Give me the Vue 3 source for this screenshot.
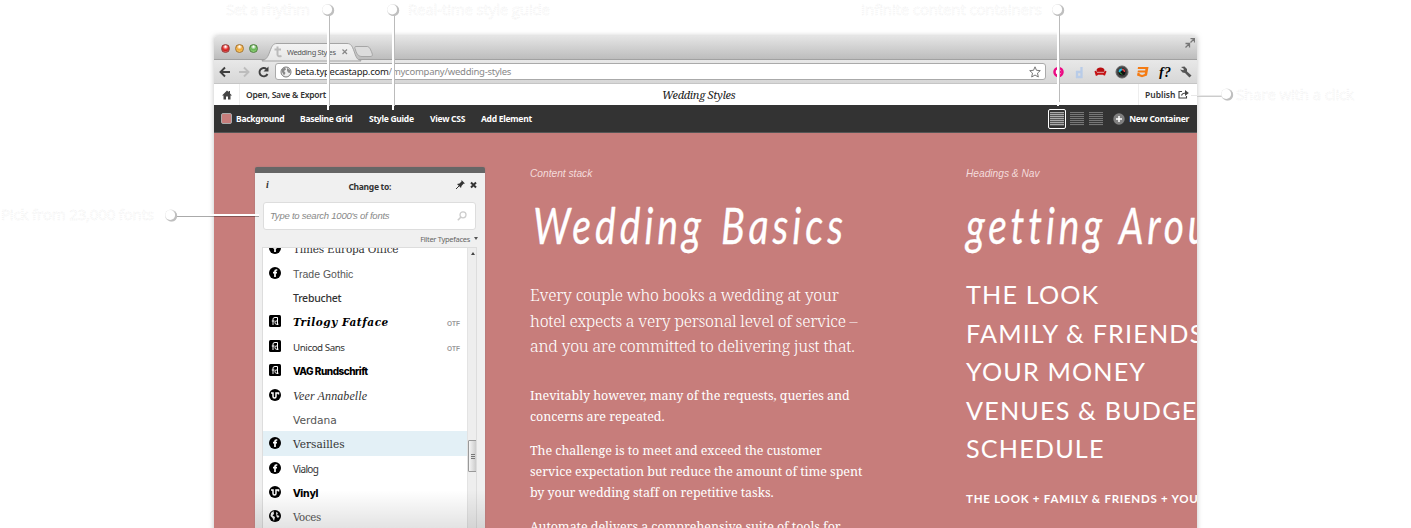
<script setup>
const fonts = [
  { name: 'Times Europa Office', icon: 'f', cls: 'times' },
  { name: 'Trade Gothic', icon: 'f', cls: 'trade' },
  { name: 'Trebuchet', icon: '', cls: 'treb' },
  { name: 'Trilogy Fatface', icon: 'fd', cls: 'trilogy', tag: 'OTF' },
  { name: 'Unicod Sans', icon: 'fd', cls: 'unicod', tag: 'OTF' },
  { name: 'VAG Rundschrift', icon: 'fd', cls: 'vag' },
  { name: 'Veer Annabelle', icon: 'v', cls: 'veer' },
  { name: 'Verdana', icon: '', cls: 'verdana' },
  { name: 'Versailles', icon: 'f', cls: 'versailles', active: true },
  { name: 'Vialog', icon: 'f', cls: 'vialog' },
  { name: 'Vinyl', icon: 'v', cls: 'vinyl' },
  { name: 'Voces', icon: 'globe', cls: 'voces' },
]
const intro = ['Every couple who books a wedding at your', 'hotel expects a very personal level of service –', 'and you are committed to delivering just that.']
const paras = [
  ['Inevitably however, many of the requests, queries and', 'concerns are repeated.'],
  ['The challenge is to meet and exceed the customer', 'service expectation but reduce the amount of time spent', 'by your wedding staff on repetitive tasks.'],
  ['Automate delivers a comprehensive suite of tools for'],
]
const nav = ['THE LOOK', 'FAMILY & FRIENDS', 'YOUR MONEY', 'VENUES & BUDGET', 'SCHEDULE']
</script>

<template>
  <div class="stage">
    <div class="window">
      <div class="titlebar">
        <div class="lights"><i class="red" /><i class="amber" /><i class="green" /></div>
        <svg class="tabs" width="116" height="19" viewBox="0 0 116 19">
          <defs><linearGradient id="tab" x2="0" y2="1"><stop offset="0" stop-color="#f3f3f3" /><stop offset="1" stop-color="#e6e6e6" /></linearGradient></defs>
          <path d="M-3 18.500C1 18 3 15 5 9C7 4 8 1.500 12 1.500H82C86 1.500 87 4 89 9C91 15 92 18 96 18.500V19H-3Z" fill="url(#tab)" stroke="#a4a4a4" />
          <path d="M91 4.500H102C104 4.500 105 6 107 11C108 14 107 14.500 105 14.500H97C94 14.500 92 13 90.500 8C89.500 5.500 89.500 4.500 91 4.500Z" fill="#dcdcdc" stroke="#a6a6a6" />
          <path d="M12.500 4.500V12.500Q12.500 15 16.500 14M9.500 7.500H16" fill="none" stroke="#bbb" stroke-width="2" />
          <text x="22" y="13" textLength="49" class="tabtext">Wedding Styles</text>
          <path d="M77.500 7.500L82 12M82 7.500L77.500 12" stroke="#888" stroke-width="1.200" />
        </svg>
        <svg class="expand" width="10" height="10" viewBox="0 0 10 10" fill="none" stroke="#777"><path d="M5.500 .5H9.500V4.500M9 1L5.500 4.500M.5 5.500H4.500V9.500M4 6L.5 9.500" stroke-width="1.300" /></svg>
      </div>

      <div class="browserbar">
        <svg class="arrows" width="50" height="12" viewBox="0 0 50 12" fill="none" stroke-width="1.900">
          <path d="M11 6H2M6 1.500L1.500 6L6 10.500" stroke="#404040" />
          <path d="M20 6H29M25 1.500L29.500 6L25 10.500" stroke="#bdbdbd" />
          <path d="M48.500 8A4.200 4.200 0 1 1 47.500 3" stroke="#404040" /><path d="M49.500 .5V5.500H44.500Z" fill="#404040" />
        </svg>
        <div class="address">
          <svg width="12" height="12" viewBox="0 0 12 12"><circle cx="6" cy="6" r="5" fill="#eee" stroke="#777" /><path d="M2 3L5 1.500L6 3.500L4 5L5.500 7L4 9.500L2 6ZM7 2L10 4L10 7L8 6.500L7 4.500Z" fill="#888" /></svg>
          <span class="url">beta.typecastapp.com<em>/mycompany/wedding-styles</em></span>
          <svg class="star" width="12" height="12" viewBox="0 0 12 12"><path d="M6 .8L7.500 4.300L11.300 4.600L8.500 7.100L9.300 11L6 9L2.700 11L3.500 7.100L.7 4.600L4.500 4.300Z" fill="#fff" stroke="#777" /></svg>
        </div>
        <svg class="extensions" width="144" height="14" viewBox="0 0 144 14">
          <circle cx="6.500" cy="7" r="4" fill="#fff" stroke="#eb0a83" stroke-width="2.500" /><path d="M8 5L10 7L8 9Z" fill="#eb0a83" />
          <path d="M29.500 2V12H25V7H29" fill="none" stroke="#b9cce8" stroke-width="2.300" />
          <path d="M44.500 5Q45 2.500 48.500 2.500Q52 2.500 52.500 5L52 7H45Z" fill="#b90d10" /><path d="M42.500 6.500Q43.500 5 45 7H52Q53.500 5 54.500 6.500L53 10.500H52L51 9.800H46L45 10.800H43.800Z" fill="#c51215" /><path d="M45 7.300H52" stroke="#eee" stroke-width=".7" />
          <circle cx="70" cy="7" r="6" fill="#454545" stroke="#666" /><circle cx="70" cy="7" r="3.500" fill="#111" /><path d="M67.500 7A2.500 2.500 0 0 1 70 4.500" stroke="#20bde5" stroke-width="1.800" fill="none" /><path d="M70 4.500A2.500 2.500 0 0 1 72.500 7" stroke="#e34545" stroke-width="1.300" fill="none" /><path d="M67.500 7L70 9.500" stroke="#40c34a" />
          <path d="M86 2H96.500L95 10.500L90 12.200L85 10.500L85.500 8H87.800L87.500 9.100L90.100 10L92.700 9L93 7.500H85.500L85.900 5.500H93.200L93.400 4H85.700Z" fill="#f47b13" />
          <text x="107" y="11.500" class="fq" textLength="12">f?</text>
          <path d="M129 2L132.500 1.500L135 4L135 6.500L139.500 10.500L137.500 12.500L133 8L130.500 7.500L128 4.500L131.300 5.300L132 4Z" fill="#555" />
        </svg>
      </div>

      <div class="appbar">
        <div class="home"><svg width="10" height="10" viewBox="0 0 10 10"><path d="M5 .5L0 5.500H1.500V9.500H4V6.500H6V9.500H8.500V5.500H10L8 3.500V1H6.700V2Z" fill="#444" /></svg></div>
        <span class="open">Open, Save &amp; Export</span>
        <span class="doc">Wedding Styles</span>
        <div class="publish"><span>Publish</span><svg width="11" height="9" viewBox="0 0 11 9" fill="none" stroke="#444" stroke-width="1.100"><path d="M4 1.500H1V8H8.500V6M3.500 5.500C4 3.500 5.500 3 8 3" /><path d="M7 0L10.800 3L7 6Z" fill="#444" stroke="none" /></svg></div>
      </div>

      <div class="tools">
        <i class="swatch" />
        <span class="t1">Background</span><span class="t2">Baseline Grid</span><span class="t3">Style Guide</span><span class="t4">View CSS</span><span class="t5">Add Element</span>
        <div class="views">
          <b v-for="n in 3" :key="n" :class="{ on: n === 1 }"><i /></b>
        </div>
        <svg width="12" height="12" viewBox="0 0 12 12"><circle cx="6" cy="6" r="5.700" fill="#808080" /><path d="M6 3V9M3 6H9" stroke="#fff" stroke-width="1.500" /></svg>
        <span class="t6">New Container</span>
      </div>

      <div class="canvas">
        <section class="panel">
          <header>
            <i class="info">i</i><b>Change to:</b>
            <svg width="22" height="10" viewBox="0 0 22 10"><path d="M5.500 0L9 3.500L7.500 3.800L5.500 6L5 8L1 4L3.500 3.500L5.500 1.500Z" fill="#333" /><path d="M3.500 5.500L0 9" stroke="#333" /><path d="M15 2.500L20 7.500M20 2.500L15 7.500" stroke="#333" stroke-width="2" /></svg>
          </header>
          <div class="search"><span>Type to search 1000's of fonts</span><svg width="10" height="10" viewBox="0 0 10 10" fill="none" stroke="#ccc"><circle cx="6" cy="3.800" r="3" stroke-width="1.300" /><path d="M4 6L.8 9.200" stroke-width="1.600" /></svg></div>
          <div class="filter"><span>Filter Typefaces</span><i /></div>
          <div class="listbox">
            <div class="list">
              <div v-for="f in fonts" :key="f.name" class="row" :class="{ active: f.active }">
                <svg width="12" height="12" viewBox="0 0 12 12">
                  <template v-if="f.icon === 'f'"><circle cx="6" cy="6" r="6" /><path d="M8.300 3H7.300Q6 3 6 4.300V10M4 5.600H8" fill="none" stroke="#fff" stroke-width="1.700" /></template>
                  <template v-if="f.icon === 'fd'"><rect width="12" height="12" rx="1.500" /><path d="M4 10V4Q4 2.500 6 2.500H8.500V10M2.800 6H5.500M8.500 6H7Q6 6 6 7.500T7 9.200H9.500" fill="none" stroke="#fff" /></template>
                  <template v-if="f.icon === 'v'"><circle cx="6" cy="6" r="6" /><path d="M2 4H4V7.500Q4 9 5.500 9Q7 9 7 7.500V4H9.500V5.500" fill="none" stroke="#fff" stroke-width="1.500" /></template>
                  <template v-if="f.icon === 'globe'"><circle cx="6" cy="6" r="6" /><path d="M2 3L4.500 1L5 4L3.500 5.500L6 7L5 11L3.500 8L1.500 6ZM7 2L9 3L8 5L10.500 6L9 8L7.500 6.500Z" fill="#f1f1f1" /></template>
                </svg>
                <span class="name"><span :class="f.cls">{{ f.name }}</span></span>
                <small v-if="f.tag">{{ f.tag }}</small>
              </div>
            </div>
            <div class="scroll"><i class="up" /><i class="thumb" /></div>
          </div>
          <div class="fade" />
        </section>

        <section class="stack">
          <div class="label">Content stack</div>
          <svg class="script" width="350" height="86" viewBox="0 0 350 86">
            <text x="3" y="63" textLength="172" lengthAdjust="spacingAndGlyphs">Wedding</text>
            <text x="191" y="63" textLength="126" lengthAdjust="spacingAndGlyphs">Basics</text>
          </svg>
          <div class="intro"><div v-for="l in intro" :key="l">{{ l }}</div></div>
          <div class="copy">
            <p v-for="(p, i) in paras" :key="i"><span v-for="l in p" :key="l">{{ l }}</span></p>
          </div>
        </section>

        <section class="headings">
          <div class="label">Headings &amp; Nav</div>
          <svg class="script" width="350" height="86" viewBox="0 0 350 86">
            <text x="0" y="63" textLength="140" lengthAdjust="spacingAndGlyphs">getting</text>
            <text x="153" y="63" textLength="142" lengthAdjust="spacingAndGlyphs">Around</text>
          </svg>
          <div class="nav"><div v-for="n in nav" :key="n">{{ n }}</div></div>
          <div class="crumbs">THE LOOK + FAMILY &amp; FRIENDS + YOUR MONEY</div>
        </section>
      </div>
    </div>

    <svg class="callouts" width="1411" height="240" viewBox="0 0 1411 240">
      <g class="notes">
        <text x="226" y="15" textLength="84">Set a rhythm</text>
        <text x="408" y="15" textLength="142">Real-time style guide</text>
        <text x="861" y="15" textLength="181">Infinite content containers</text>
        <text x="1236" y="100" textLength="118">Share with a click</text>
        <text x="1" y="220" textLength="153">Pick from 23,000 fonts</text>
      </g>
      <g v-for="p in [[328, 110], [393, 110], [1058, 106]]" :key="p[0]">
        <path :d="`M${p[0] + 1.500} 15V${p[1] - 4}`" stroke="#bbb" /><path :d="`M${p[0]} 13V${p[1]}`" stroke="#fff" stroke-width="2" />
      </g>
      <path d="M1197 96.500H1223" stroke="#ccc" /><path d="M1191 95.500H1223" stroke="#e8e8e8" />
      <path d="M176 216.500H259" stroke="#0005" /><path d="M176 215H259" stroke="#fff" stroke-width="2" />
      <g v-for="p in [[328, 9.500], [393, 9.500], [1058, 9.500], [1227, 94], [171, 215]]" :key="p[0]">
        <circle :cx="p[0]" :cy="p[1] + .5" r="6" fill="#ddd" /><circle :cx="p[0] + .7" :cy="p[1] + 1" r="5.500" fill="#bfbfbf" /><circle :cx="p[0] - .8" :cy="p[1]" r="4.900" fill="#fff" />
      </g>
    </svg>
  </div>
</template>

<style>
html, body { margin: 0; overflow: hidden; background: #fff; }
</style>
<style scoped>
* { box-sizing: border-box; }
.stage { position: relative; width: 1411px; height: 528px; overflow: hidden; padding: 36px 214px 0; font-family: "Noto Sans", "Open Sans", sans-serif; }
.window { width: 983px; height: 500px; box-shadow: 0 0 5px #8888; border-radius: 3px 3px 0 0; }
svg { display: block; flex: none; }
.titlebar { height: 24px; display: flex; background: linear-gradient(#e5e5e5, #bdbdbd); border-bottom: 1px solid #a1a1a1; border-radius: 3px 3px 0 0; }
.lights { display: flex; gap: 4.500px; padding: 7.500px 0 0 6.500px; width: 49px; }
.lights i { width: 9.500px; height: 9.500px; border-radius: 50%; border: 1px solid #943b38; background: radial-gradient(circle at 50% 25%, #fff 5%, #ed3f3b 40%, #c82020 60%, #ff9b98); }
.lights .amber { border-color: #a57431; background: radial-gradient(circle at 50% 25%, #fff 5%, #f0a838 45%, #ffda75); }
.lights .green { border-color: #4d803d; background: radial-gradient(circle at 50% 25%, #fff 5%, #67b554 45%, #a6e38e); }
.tabs { margin-top: 6px; margin-left: 2px; overflow: visible; }
.tabtext { font: 7.500px "Noto Sans", sans-serif; fill: #555; }
.expand { margin: 2px 2px 0 auto; }
.browserbar { height: 24px; display: flex; align-items: center; background: linear-gradient(#e8e8e8, #d7d7d7); border-bottom: 1px solid #c5c5c5; }
.arrows { margin-left: 5px; }
.address { width: 771px; height: 17px; margin-left: 6px; border: 1px solid #aaa; border-radius: 3px; background: #fff; display: flex; align-items: center; padding: 0 4px; }
.url { font-size: 9.500px; line-height: 15px; margin-left: 3px; color: #222; letter-spacing: -.25px; }
.url em { font-style: normal; color: #888; }
.star { margin-left: auto; }
.extensions { margin-left: 6px; }
.fq { font: italic bold 14px "Liberation Serif", serif; }
.appbar { height: 21px; display: flex; align-items: center; background: #fff; font-size: 8.500px; font-weight: 600; color: #333; }
.home { width: 26px; height: 21px; padding: 6px 0 0 8px; border-right: 1px solid #eee; }
.open { width: 80px; margin-left: 6px; white-space: nowrap; letter-spacing: -.22px; }
.doc { margin-left: 336px; font: italic 11px "Noto Serif", "DejaVu Serif", serif; color: #222; letter-spacing: -.3px; width: 90px; white-space: nowrap; }
.publish { height: 21px; margin-left: auto; width: 59px; border-left: 1px solid #eee; display: flex; align-items: center; gap: 3px; padding-left: 6px; }
.tools { height: 28px; background: #333; border-bottom: 1px solid #555; color: #fff; display: flex; align-items: center; font-size: 8.500px; font-weight: 700; white-space: nowrap; letter-spacing: -.27px; }
.tools span { padding-bottom: 1px; }
.swatch { width: 11px; height: 11px; margin: 0 4px 0 7px; border: 1px solid #aaa; border-radius: 2px; background: #c77d7b; }
.t1 { width: 64px; }.t2 { width: 69px; }.t3 { width: 61px; }.t4 { width: 51px; }.t5 { width: 60px; }
.views { display: flex; gap: 1.500px; margin: 0 8px 0 auto; }
.views b { width: 18px; height: 20px; padding: 3px 2px; }
.views i { display: block; height: 14px; background: repeating-linear-gradient(#777 0 1px, #383838 1px 2px); }
.views .on { border: 1px solid #fff; border-radius: 2px; padding: 2px 1px; }
.views .on i { background: repeating-linear-gradient(#aaa 0 1px, #555 1px 2px); }
.t6 { margin: 0 8px 0 4px; }
.canvas { height: 395px; background: #c77d7b; color: #fff; overflow: hidden; display: flex; align-items: flex-start; }
.panel { position: relative; flex: none; margin: 34px 0 0 41px; width: 230px; height: 361px; background: #f0f0f0; border-top: 6px solid #666; border-radius: 2px 2px 0 0; color: #333; box-shadow: 0 0 2px #7777; }
.panel header { height: 29px; display: flex; align-items: center; justify-content: space-between; padding: 0 7px 6px 11px; font-size: 8.500px; letter-spacing: -.3px; }
.panel header b { margin-left: 15px; padding-top: 3px; }
.info { font: italic bold 10px "Liberation Serif", serif; }
.search { margin: 0 9px 0 8px; height: 28px; border: 1px solid #ddd; border-radius: 3px; background: #fff; display: flex; align-items: center; justify-content: space-between; padding: 0 8px 1px 6px; font: italic 9.500px "Liberation Sans", sans-serif; letter-spacing: -.23px; color: #888; }
.filter { height: 17px; display: flex; align-items: center; justify-content: flex-end; gap: 4px; padding: 0 7px 0 0; font-size: 7.500px; letter-spacing: -.3px; color: #666; }
.filter i { border: 2px solid transparent; border-top: 3px solid #555; border-bottom: 0; }
.listbox { margin: 0 8px 0 7px; height: 282px; border: 1px solid #ddd; border-bottom: 0; background: #fff; display: flex; overflow: hidden; }
.list { width: 204px; margin-top: -12px; flex: none; }
.row { height: 24.400px; display: flex; align-items: center; padding-left: 6px; }
.active { background: #e3f0f6; }
.name { width: 148px; height: 20px; margin-left: 12px; line-height: 19px; white-space: nowrap; }
.row small { margin: 5px 0 0 6px; font: bold 6.500px "Liberation Sans", sans-serif; color: #999; }
.times { font: 10.500px "DejaVu Serif", serif; letter-spacing: -.2px; }
.trade { font: 10.500px "Liberation Sans", sans-serif; color: #555; }
.treb { font: 500 10.500px "Noto Sans", sans-serif; letter-spacing: -.25px; }
.trilogy { font: italic bold 10.500px "DejaVu Serif", serif; letter-spacing: .55px; color: #000; }
.unicod { font: 9.800px "Noto Sans", sans-serif; letter-spacing: -.45px; }
.vag { font: 800 10px "Inter", sans-serif; letter-spacing: -.5px; color: #000; }
.veer { font: italic 12px "Liberation Serif", serif; letter-spacing: .1px; }
.verdana { font: 10.700px "DejaVu Sans", sans-serif; color: #555; }
.versailles { font: 10.500px "DejaVu Serif", serif; letter-spacing: .05px; }
.vialog { font: 10px "Noto Sans", sans-serif; letter-spacing: -.6px; }
.vinyl { font: bold 11px "Liberation Sans Narrow", "DejaVu Sans Condensed", sans-serif; letter-spacing: -.5px; color: #000; }
.voces { font: 10.200px "DejaVu Serif", serif; letter-spacing: -.3px; color: #555; }
.scroll { flex: 1; background: #eee; border-left: 1px solid #e3e3e3; display: flex; flex-direction: column; align-items: center; }
.up { margin-top: 4px; border: 2px solid transparent; border-bottom: 3px solid #444; border-top: 0; }
.thumb { width: 9px; height: 32px; margin-top: 185px; border: 1px solid #999; border-radius: 1px; background: repeating-linear-gradient(#777 0 1px, #ddd 1px 2px) center / 4px 5px no-repeat, linear-gradient(90deg, #f5f5f5, #ccc); }
.fade { position: absolute; left: 0; right: 0; bottom: 0; height: 38px; background: linear-gradient(#0000, #0000001c); }
.stack { flex: none; width: 435px; padding: 34px 0 0 45px; }
.headings { flex: none; width: 400px; padding: 34px 0 0 46px; white-space: nowrap; }
.label { height: 14px; font: italic 10.200px/14px "Liberation Sans", sans-serif; color: #f4dcdc; }
.script { height: 86px; overflow: visible; }
.script text { font: italic 400 50px "Lato", sans-serif; letter-spacing: 5px; fill: #fff; stroke: #fff; stroke-width: .3px; stroke-linejoin: round; }
.intro { margin-top: 16px; font: 300 16px/25.500px "Noto Serif", "Liberation Serif", serif; letter-spacing: -.24px; white-space: nowrap; }
.copy { margin-top: 25px; white-space: nowrap; }
.copy p { margin: 0 0 13px; font: 12.500px/21px "Noto Serif", "DejaVu Serif", serif; letter-spacing: -.06px; }
.copy span { display: block; }
.nav { margin-top: 8px; font: 400 25.200px/38.500px "Lato", "Open Sans", sans-serif; letter-spacing: 1.150px; }
.crumbs { margin-top: 21px; font: 700 11.500px/20px "Lato", sans-serif; letter-spacing: .75px; }
.callouts { position: absolute; left: 0; top: 0; }
.notes text { font: 15px "Open Sans", sans-serif; fill: #fff; stroke: #ececec; stroke-width: .5px; stroke-dasharray: 1 1; }
</style>
